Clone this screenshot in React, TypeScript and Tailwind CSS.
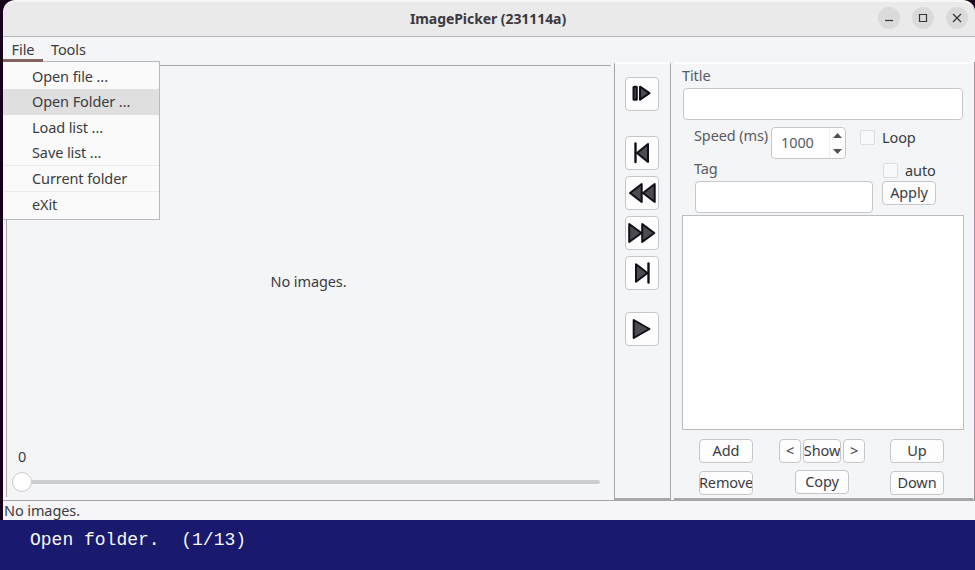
import type { ReactNode } from "react";

const FONT = "font-['Noto_Sans','Open_Sans',sans-serif]";

function Button({ className = "", children }: { className?: string; children?: ReactNode }) {
  return (
    <button
      className={`flex h-[24px] shrink-0 items-center justify-center overflow-hidden rounded-[4px] border border-[#c5c7cb] bg-[#fdfdfe] pb-[2px] whitespace-nowrap ${className}`}
    >
      {children}
    </button>
  );
}

function PlayerButton({ className = "", children }: { className?: string; children: ReactNode }) {
  return (
    <button className={`flex size-[34px] shrink-0 rounded-[4px] border border-[#c5c7cb] bg-[#fdfdfe] ${className}`}>
      <svg
        width="32"
        height="32"
        viewBox="0 0 32 32"
        fill="#4b4b50"
        stroke="#120d18"
        strokeWidth="2"
        strokeLinejoin="round"
        strokeLinecap="round"
      >
        {children}
      </svg>
    </button>
  );
}

function MenuItem({ className = "", label }: { className?: string; label: string }) {
  return <div className={`flex items-center pb-[2px] pl-[29px] ${className}`}>{label}</div>;
}

function Checkbox() {
  return <span className="mt-[1px] size-[15px] shrink-0 rounded-[2px] border border-[#dcdde1] bg-[#f8f9fb]" />;
}

function WindowButton({ children }: { children: ReactNode }) {
  return (
    <button className="flex size-[22px] items-center justify-center rounded-full bg-[#dadada]">
      <svg width="22" height="22" viewBox="0 0 22 22" fill="none" stroke="#34343b" strokeWidth="1.2">
        {children}
      </svg>
    </button>
  );
}

export default function App() {
  return (
    <div className={`flex h-[570px] w-[975px] flex-col overflow-hidden bg-[#170019] text-[14.5px] leading-[18px] tracking-[-0.1px] text-[#3b3c41] ${FONT}`}>
      <div className="ml-[3px] flex h-[520px] w-[972px] flex-col">
        <header className="relative flex h-[37px] shrink-0 items-center justify-center rounded-t-[12px] border-t-2 border-b border-t-[#f7f7f7] border-b-[#b3b4bb] bg-[#eaeaea]">
          <h1 className="mr-[2px] text-[14px] font-bold tracking-[-0.07px] text-[#3a3a3f]">ImagePicker (231114a)</h1>
          <div className="absolute top-[5px] right-[7px] flex gap-[12px]">
            <WindowButton><path d="M7 13.5h8" /></WindowButton>
            <WindowButton><path d="M7.5 7.5h7v7h-7z" /></WindowButton>
            <WindowButton><path d="M7 7l8 8M15 7l-8 8" /></WindowButton>
          </div>
        </header>

        <nav className="relative flex h-[25px] shrink-0 bg-[#f4f5f7]">
          <div className="relative z-20 flex w-[40px] justify-center border-b-[3px] border-[#83635f] pt-[3px]">File</div>
          <div className="pt-[3px] pl-[8px]">Tools</div>
          <div className="absolute top-[24px] left-0 z-10 flex h-[159px] w-[157px] flex-col border-t border-r border-b border-[#b8b9bd] bg-[#fafafa]">
            <MenuItem className="h-[27px] pt-[3px]" label="Open file ..." />
            <MenuItem className="h-[26px] bg-[#dfdfe0]" label="Open Folder ..." />
            <MenuItem className="h-[25px]" label="Load list ..." />
            <MenuItem className="h-[25px]" label="Save list ..." />
            <MenuItem className="h-[26px] border-t border-[#ececed]" label="Current folder" />
            <MenuItem className="h-[26px] border-t border-[#ececed]" label="eXit" />
          </div>
        </nav>

        <main className="flex h-[438px] shrink-0 bg-[#f4f5f7]">
          <section className="flex w-[611px] shrink-0 flex-col pt-[3px] pl-[3px]">
            <div className="flex h-[432px] w-[605px] flex-col border-t border-l border-[#aaa9ae]">
              <div className="mt-[206px] w-[603px] text-center">No images.</div>
              <div className="mt-[157px] pl-[11px]">0</div>
              <div className="mt-[7px] ml-[5px] flex h-[20px] w-[588px] items-center">
                <span className="size-[20px] shrink-0 rounded-full border border-[#c9c9cb] bg-white" />
                <span className="h-[4px] grow rounded-r-[2px] bg-[#cdced0]" />
              </div>
            </div>
          </section>

          <section className="flex w-[57px] shrink-0 flex-col items-center border-x border-t-2 border-b-2 border-x-[#a5a6ab] border-t-[#fdfdfe] border-b-[#a5a6ab] pt-[13px] pr-[1px]">
            <PlayerButton>
              <rect x="7.5" y="8.700" width="3.300" height="13" rx="0.500" />
              <path d="M14 8.700v13l9.500-6.500z" />
            </PlayerButton>
            <PlayerButton className="mt-[25px]">
              <path d="M22 7v18L11 16z" />
              <path d="M9.500 6.500v18.500" strokeWidth="2.400" />
            </PlayerButton>
            <PlayerButton className="mt-[6px]">
              <path d="M15.700 7v18L4 16z" />
              <path d="M28.700 7v18L17 16z" />
            </PlayerButton>
            <PlayerButton className="mt-[6px]">
              <path d="M3.200 7v18L15.500 16z" />
              <path d="M16.200 7v18L28.300 16z" />
            </PlayerButton>
            <PlayerButton className="mt-[6px]">
              <path d="M10 7.300v17.500L21.500 16z" />
              <path d="M22.500 6.500v19" strokeWidth="2.400" />
            </PlayerButton>
            <PlayerButton className="mt-[22px]">
              <path d="M7.700 7v18l15.800-9z" />
            </PlayerButton>
          </section>

          <section className="ml-[3px] flex w-[300px] shrink-0 flex-col border-t-2 border-r border-b-2 border-t-[#fdfdfe] border-r-[#fbf7fa] border-b-[#a5a6ab]">
            <div className="mt-[2px] h-[22px] pl-[8px] text-[#5a5b60]">Title</div>
            <div className="ml-[9px] h-[32px] w-[280px] shrink-0 rounded-[4px] border border-[#c5c7cb] bg-white" />

            <div className="mt-[7px] flex h-[88px] shrink-0 pl-[20px]">
              <div className="w-[153px]">
                <div className="flex h-[32px]">
                  <span className="-mt-[1px] w-[77px] whitespace-nowrap text-[#5a5b60]">Speed (ms)</span>
                  <div className="flex w-[75px] shrink-0 rounded-[4px] border border-[#c5c7cb] bg-white">
                    <span className="w-[57px] pt-[5px] pl-[9px] text-[#5a5b60]">1000</span>
                    <div className="flex w-[16px] shrink-0 flex-col items-center justify-between border-l border-[#eeeef0] pt-[5px] pb-[4px]">
                      <svg width="9" height="5" viewBox="0 0 9 5" fill="#515258"><path d="M4.500 0L9 5H0z" /></svg>
                      <svg width="9" height="5" viewBox="0 0 9 5" fill="#515258"><path d="M4.500 5L9 0H0z" /></svg>
                    </div>
                  </div>
                </div>
                <div className="h-[22px] text-[#5a5b60]">Tag</div>
                <div className="ml-[1px] h-[32px] w-[178px] rounded-[4px] border border-[#c5c7cb] bg-white" />
              </div>
              <div className="flex w-[100px] flex-col">
                <div className="mt-[1px] ml-[13px] flex h-[18px] items-center gap-[7px]"><Checkbox />Loop</div>
                <div className="mt-[15px] ml-[36px] flex h-[18px] items-center gap-[7px]"><Checkbox />auto</div>
                <Button className="mt-[2px] ml-[35px] w-[54px]">Apply</Button>
              </div>
            </div>

            <div className="ml-[8px] h-[215px] w-[282px] shrink-0 border border-[#bcbdc1] bg-white" />

            <div className="mt-[9px] ml-[25px] flex h-[24px]">
              <Button className="h-[23px] w-[54px]">Add</Button>
              <Button className="ml-[26px] h-[23px] w-[22px]">&lt;</Button>
              <Button className="ml-[2px] h-[23px] w-[38px]">Show</Button>
              <Button className="ml-[2px] h-[23px] w-[22px]">&gt;</Button>
              <Button className="ml-[25px] h-[23px] w-[54px]">Up</Button>
            </div>
            <div className="mt-[7px] ml-[25px] flex h-[25px]">
              <Button className="mt-[1px] h-[23px] w-[54px]">Remove</Button>
              <Button className="ml-[42px] h-[23px] w-[54px]">Copy</Button>
              <Button className="mt-[1px] ml-[41px] h-[23px] w-[54px]">Down</Button>
            </div>
          </section>
          <div className="w-[1px] grow bg-[#a08f9f]" />
        </main>
        <footer className="h-[20px] shrink-0 border-t border-[#a5a6ab] bg-[#f6f5f8] pl-[1px]">No images.</footer>
      </div>
      <div className="h-[50px] shrink-0 bg-[#19196e] pt-[10px] pl-[30px] font-['Liberation_Mono',monospace] text-[18px] leading-[20px] tracking-normal whitespace-pre text-[#f8f8f4]">Open folder.  (1/13)</div>
    </div>
  );
}
